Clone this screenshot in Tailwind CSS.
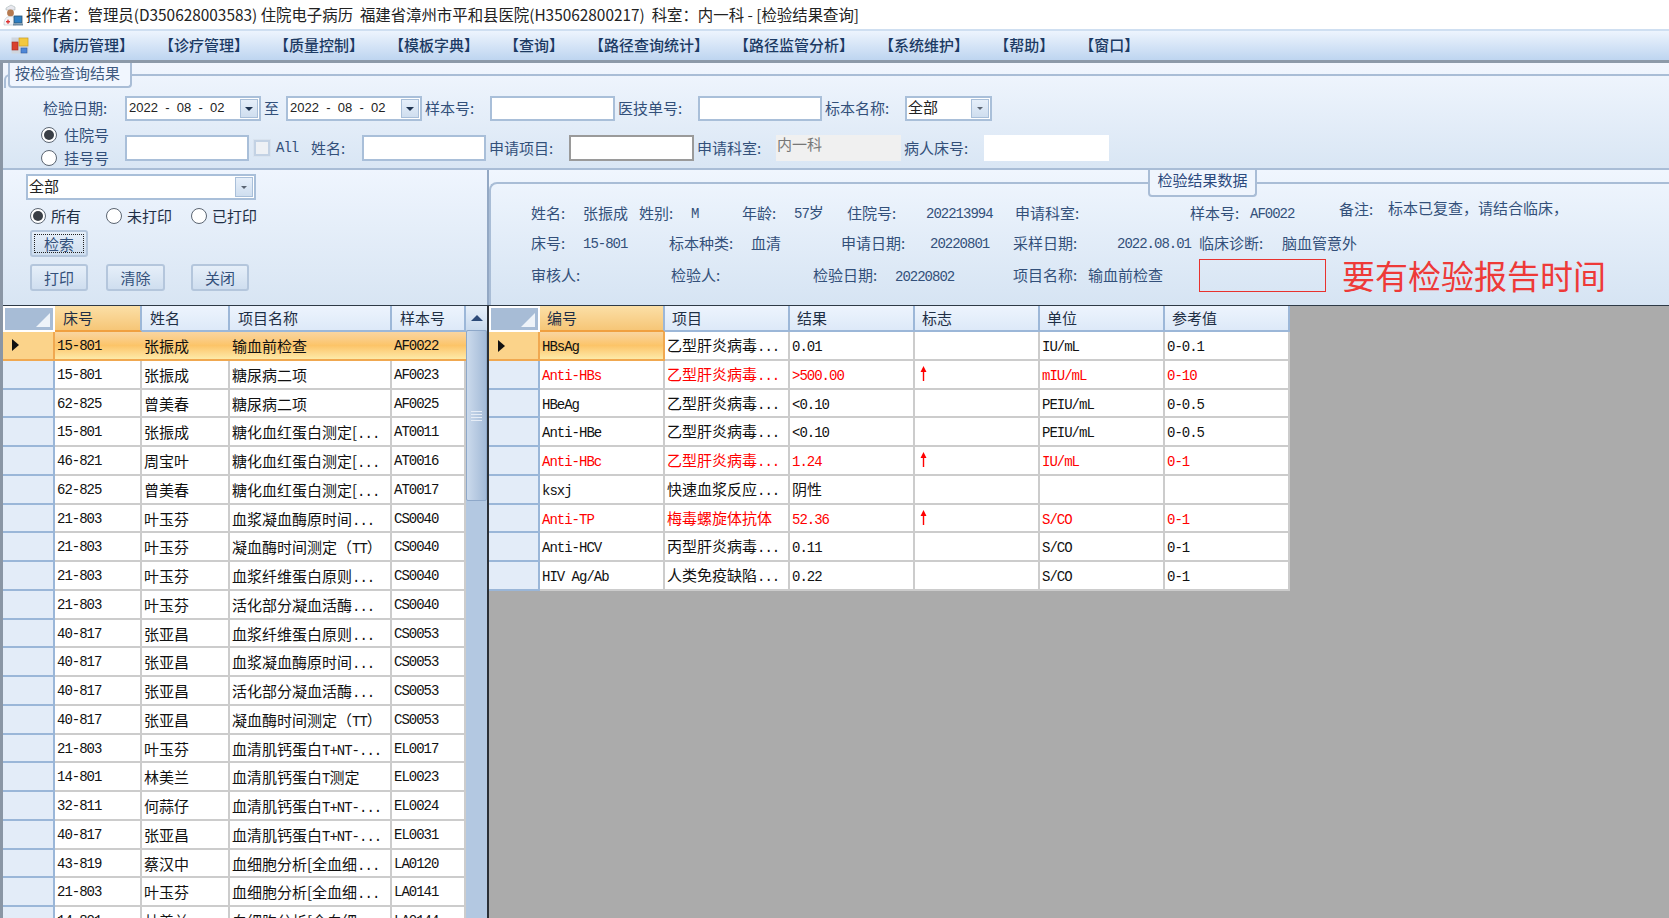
<!doctype html>
<html lang="zh">
<head>
<meta charset="utf-8">
<title>检验结果查询</title>
<script src="https://cdn.jsdelivr.net/npm/@tailwindcss/browser@4"></script>
</head>
<body class="m-0">
<div class="w-[1669px] h-[918px] overflow-hidden flex flex-col bg-[#8a96a5] text-[#111] font-['Noto_Sans_CJK_SC',sans-serif]">

  <!-- title bar -->
  <div class="h-[29px] shrink-0 bg-white flex items-center pl-[3px] text-[15.4px] text-[#222]">
    <svg class="w-[20px] h-[22px] mr-[3px]" viewBox="0 0 20 22">
      <path d="M3 4 L8 1 L12 3 L12 6 L3 6Z" fill="#e8e8ee" stroke="#9aa" stroke-width=".5"/>
      <circle cx="7.5" cy="9" r="3.4" fill="#b5794f"/>
      <path d="M1 21 C1 14 4 12.5 7.5 12.5 C11 12.5 13 14 13 21Z" fill="#f3f5f8" stroke="#a8b0bb" stroke-width=".5"/>
      <rect x="3" y="17" width="4" height="1.4" fill="#d33"/><rect x="4.3" y="15.7" width="1.4" height="4" fill="#d33"/>
      <rect x="11" y="12" width="8" height="7" fill="#2f7fc4" stroke="#27506f" stroke-width=".8"/>
      <rect x="10" y="19.5" width="10" height="2" fill="#6f8ba3"/>
    </svg>
    <span class="whitespace-pre">操作者：管理员(D350628003583) 住院电子病历  福建省漳州市平和县医院(H35062800217)  科室：内一科 - [检验结果查询]</span>
  </div>

  <!-- menu bar -->
  <div class="h-[34px] shrink-0 border-t-2 border-[#cfdff1] border-b-[3px] border-b-[#8d9aa9] bg-gradient-to-b from-[#edf4fd] to-[#bed5f0] flex items-center pl-[11px] text-[15px] font-medium text-[#1c3a63]">
    <svg class="w-[18px] h-[17px] mr-[15px]" viewBox="0 0 18 17">
      <rect x="0.5" y="0.5" width="17" height="16" fill="#cfd6de"/>
      <rect x="8" y="1" width="9" height="8" fill="#f3c83e" stroke="#c99a1c" stroke-width=".6"/>
      <rect x="1" y="5" width="6" height="8" fill="#d9412f" stroke="#a52b1f" stroke-width=".6"/>
      <rect x="10" y="11" width="6" height="5" fill="#4f87d6" stroke="#2e5ea8" stroke-width=".6"/>
    </svg>
    <nav class="flex gap-[25px]">
      <span>【病历管理】</span><span>【诊疗管理】</span><span>【质量控制】</span><span>【模板字典】</span><span>【查询】</span><span>【路径查询统计】</span><span>【路径监管分析】</span><span>【系统维护】</span><span>【帮助】</span><span>【窗口】</span>
    </nav>
  </div>

  <div class="flex-1 min-h-0 pl-[3px] flex flex-col">
    <!-- query group -->
    <section class="relative h-[107px] shrink-0 pt-[33px] bg-gradient-to-b from-[#f1f6fe] to-[#d9e6f4] border-b-2 border-[#a9bdd6] text-[15px] text-[#33507a] [&_span]:whitespace-nowrap">
      <div class="absolute left-[1px] right-0 top-[11px] h-[14px] border-t-2 border-l-2 border-[#a9bdd6] rounded-tl-[6px]"></div>
      <div class="absolute left-[5px] top-0 w-[124px] h-[25px] bg-[#f1f6fe] border-2 border-t-0 border-[#a9bdd6] rounded-b-[4px] pl-[5px] text-[15px] leading-[20px] text-[#3f5a80]">按检验查询结果</div>

      <div class="relative flex items-center h-[25px] pl-[40px]">
        <span class="w-[82px]">检验日期:</span>
        <div class="w-[136px] h-[25px] bg-white border-2 border-[#a9bfd9] flex items-center pl-[2px] pr-[1px] text-[13px] text-[#222] font-['Liberation_Sans',sans-serif]">
          <span class="flex-1 -mt-[2px] !whitespace-pre">2022  -  08  -  02</span>
          <span class="w-[18px] h-[19px] bg-gradient-to-b from-[#e6effa] to-[#cfdeef] border border-[#a9bfd9] flex items-center justify-center"><i class="border-x-[4px] border-x-transparent border-t-[4px] border-t-[#1f3350]"></i></span>
        </div>
        <span class="w-[25px] pl-[3px]">至</span>
        <div class="w-[136px] h-[25px] bg-white border-2 border-[#a9bfd9] flex items-center pl-[2px] pr-[1px] text-[13px] text-[#222] font-['Liberation_Sans',sans-serif]">
          <span class="flex-1 -mt-[2px] !whitespace-pre">2022  -  08  -  02</span>
          <span class="w-[18px] h-[19px] bg-gradient-to-b from-[#e6effa] to-[#cfdeef] border border-[#a9bfd9] flex items-center justify-center"><i class="border-x-[4px] border-x-transparent border-t-[4px] border-t-[#1f3350]"></i></span>
        </div>
        <span class="w-[68px] pl-[3px]">样本号:</span>
        <div class="w-[125px] h-[25px] bg-white border-2 border-[#a9bfd9]"></div>
        <span class="w-[83px] pl-[3px]">医技单号:</span>
        <div class="w-[124px] h-[25px] bg-white border-2 border-[#a9bfd9]"></div>
        <span class="w-[83px] pl-[3px]">标本名称:</span>
        <div class="w-[87px] h-[25px] bg-white border-2 border-[#a9bfd9] flex items-center pl-[1px] pr-[1px] text-[15px] text-[#222]">
          <span class="flex-1 -mt-[2px]">全部</span>
          <span class="w-[18px] h-[19px] bg-gradient-to-b from-[#e6effa] to-[#cfdeef] border border-[#a9bfd9] flex items-center justify-center"><i class="border-x-[3px] border-x-transparent border-t-[3px] border-t-[#5a6472]"></i></span>
        </div>
      </div>

      <div class="relative flex h-[48px] pl-[38px]">
        <div class="w-[84px] flex flex-col pt-[3px]">
          <label class="h-[26px] flex items-center gap-[7px]"><span class="w-[16px] h-[16px] rounded-full border border-[#5b6572] bg-white flex items-center justify-center"><i class="w-[10px] h-[10px] rounded-full bg-[#3a3f46]"></i></span>住院号</label>
          <label class="h-[26px] flex items-center gap-[7px]"><span class="w-[16px] h-[16px] rounded-full border border-[#5b6572] bg-white"></span>挂号号</label>
        </div>
        <div class="flex items-center h-[26px] mt-[14px]">
          <div class="w-[124px] h-[26px] bg-white border-2 border-[#a9bfd9]"></div>
          <span class="w-[16px] h-[16px] ml-[5px] border-2 border-[#c3d2e4] bg-[#eef1f5] outline outline-1 outline-[#d9e3ef]"></span>
          <span class="w-[40px] pl-[6px] text-[14px] tracking-[-1px] font-['Liberation_Mono',monospace]">All</span>
          <span class="w-[52px] pl-[1px]">姓名:</span>
          <div class="w-[124px] h-[26px] bg-white border-2 border-[#a9bfd9]"></div>
          <span class="w-[83px] pl-[3px]">申请项目:</span>
          <div class="w-[125px] h-[26px] bg-white border-2 border-[#9a9a9a]"></div>
          <span class="w-[82px] pl-[3px]">申请科室:</span>
          <div class="w-[125px] h-[26px] bg-[#f0f0f0] pl-[1px] text-[15px] leading-[18px] text-[#777]">内一科</div>
          <span class="w-[83px] pl-[3px]">病人床号:</span>
          <div class="w-[125px] h-[26px] bg-white"></div>
        </div>
      </div>
    </section>

    <!-- middle -->
    <div class="h-[135px] shrink-0 flex">
      <div class="w-[484px] shrink-0 pt-[4px] bg-gradient-to-b from-[#eff5fe] to-[#d8e5f3] text-[15px] text-[#1f2f45]">
        <div class="ml-[23px] w-[230px] h-[26px] bg-white border-2 border-[#a9bfd9] flex items-center pl-[1px] pr-[1px] text-[#222]">
          <span class="flex-1 -mt-[2px]">全部</span>
          <span class="w-[18px] h-[20px] bg-gradient-to-b from-[#e6effa] to-[#cfdeef] border border-[#a9bfd9] flex items-center justify-center"><i class="border-x-[3px] border-x-transparent border-t-[3px] border-t-[#5a6472]"></i></span>
        </div>
        <div class="mt-[7px] ml-[27px] h-[18px] flex">
          <label class="w-[76px] flex items-center gap-[5px]"><span class="w-[16px] h-[16px] rounded-full border border-[#5b6572] bg-white flex items-center justify-center"><i class="w-[10px] h-[10px] rounded-full bg-[#3a3f46]"></i></span>所有</label>
          <label class="w-[85px] flex items-center gap-[5px]"><span class="w-[16px] h-[16px] rounded-full border border-[#5b6572] bg-white"></span>未打印</label>
          <label class="flex items-center gap-[5px]"><span class="w-[16px] h-[16px] rounded-full border border-[#5b6572] bg-white"></span>已打印</label>
        </div>
        <div class="mt-[5px] ml-[27px] w-[58px] h-[27px] p-[2px] bg-gradient-to-b from-[#e6eff9] to-[#cfdeef] border-2 border-[#b4c6dc] rounded-[3px]">
          <div class="h-full border border-dotted border-[#222] text-center leading-[17px] text-[#33507a]">检索</div>
        </div>
        <div class="mt-[7px] ml-[27px] flex gap-[18px] text-[#33507a] [&>button]:w-[58px] [&>button]:h-[27px] [&>button]:bg-gradient-to-b [&>button]:from-[#e6eff9] [&>button]:to-[#cfdeef] [&>button]:border-2 [&>button]:border-[#b4c6dc] [&>button]:rounded-[3px] [&>button]:leading-[20px]">
          <button>打印</button><button class="!w-[59px]">清除</button><button class="ml-[8px]">关闭</button>
        </div>
      </div>
      <div class="w-[2px] shrink-0 bg-[#93a8c4]"></div>
      <section class="relative flex-1 bg-gradient-to-b from-[#f0f6fe] to-[#d6e4f3] text-[15px] text-[#33507a]">
        <div class="absolute inset-x-0 top-[12px] bottom-0 border-t-2 border-l-2 border-[#a9bdd6] rounded-tl-[8px]"></div>
        <div class="absolute left-[659px] top-0 w-[109px] h-[27px] bg-[#eff5fd] border-2 border-t-0 border-[#a9bdd6] rounded-b-[4px] text-center text-[15px] leading-[20px] text-[#2c4a7d]">检验结果数据</div>
        <div class="relative pl-[42px] pt-[33px] [&>div]:flex [&>div]:items-center [&_b]:font-normal [&_b]:text-[14px] [&_b]:tracking-[-1px] [&_b]:font-['Liberation_Mono',monospace] [&_span]:whitespace-nowrap">
          <div class="h-[20px]">
            <span class="w-[52px]">姓名:</span><span class="w-[56px]">张振成</span><span class="w-[52px]">姓别:</span><span class="w-[51px]"><b>M</b></span><span class="w-[52px]">年龄:</span><span class="w-[53px]"><b>57</b>岁</span><span class="w-[79px]">住院号:</span><span class="w-[89px]"><b>202213994</b></span><span class="w-[175px]">申请科室:</span><span class="w-[60px]">样本号:</span><span class="w-[89px]"><b>AF0022</b></span><span class="w-[49px] -mt-[7px]">备注:</span><span class="-mt-[9px]">标本已复查，请结合临床，</span>
          </div>
          <div class="h-[20px] mt-[10px]">
            <span class="w-[52px]">床号:</span><span class="w-[86px]"><b>15-801</b></span><span class="w-[82px]">标本种类:</span><span class="w-[90px]">血清</span><span class="w-[89px]">申请日期:</span><span class="w-[83px]"><b>20220801</b></span><span class="w-[104px]">采样日期:</span><span class="w-[82px]"><b>2022.08.01</b></span><span class="w-[83px]">临床诊断:</span><span>脑血管意外</span>
          </div>
          <div class="h-[33px] mt-[6px]">
            <span class="w-[140px]">审核人:</span><span class="w-[142px]">检验人:</span><span class="w-[82px]">检验日期:</span><span class="w-[118px]"><b>20220802</b></span><span class="w-[75px]">项目名称:</span><span class="w-[111px]">输血前检查</span>
            <span class="w-[127px] h-[33px] border border-[#e8322e]"></span><span class="ml-[16px] -mt-[1px] text-[33px] leading-[33px] text-[#ee3a38]">要有检验报告时间</span>
          </div>
        </div>
      </section>
    </div>

    <!-- grids -->
    <div class="flex-1 min-h-0 flex border-t border-[#2e3a46]">
      <div class="w-[484px] shrink-0 flex overflow-hidden">
        <div class="w-[463px] shrink-0 bg-[#ababab] text-[15px] [&>div]:grid [&>div]:grid-cols-[52px_87px_88px_162px_74px] [&>div>span]:block [&>div>span]:whitespace-nowrap [&>div>span]:overflow-hidden">
          <div class="h-[26px] leading-[24px] text-[#1f2f45] [&>span]:bg-gradient-to-b [&>span]:from-[#edf4fd] [&>span]:to-[#dde9f8] [&>span]:border-r-2 [&>span]:border-b-2 [&>span]:border-[#9cb7d8] [&>span]:pl-[8px]">
            <span class="relative !bg-none !bg-[#a7bcd6] border-2 !border-white"><i class="absolute right-[3px] bottom-[3px] w-[14px] h-[14px] bg-[#eef3f9] [clip-path:polygon(100%_0,100%_100%,0_100%)]"></i></span><span class="!from-[#fbdfa6] !to-[#f6c677] !border-b-[#f0a040]">床号</span><span>姓名</span><span>项目名称</span><span>样本号</span>
          </div>
          <div class="h-[28.75px] leading-[27px] bg-gradient-to-b from-[#f9d5a0] via-[#fcc468] to-[#fdeaa8] border-b-2 border-[#f0a850] [&>span]:pl-[2px] [&>span:nth-child(2)]:text-[14px] [&>span:nth-child(2)]:tracking-[-1px] [&>span:nth-child(2)]:leading-[28px] [&>span:nth-child(2)]:font-['Liberation_Mono',monospace] [&>span:nth-child(5)]:text-[14px] [&>span:nth-child(5)]:tracking-[-1px] [&>span:nth-child(5)]:leading-[28px] [&>span:nth-child(5)]:font-['Liberation_Mono',monospace]">
            <span class="!flex items-center !pl-[9px] bg-[#fbd38a] border-r-2 border-[#f0a850]"><svg class="w-[7px] h-[12px]" viewBox="0 0 7 12"><path d="M0 0L7 6L0 12Z" fill="#111"/></svg></span><span>15-801</span><span>张振成</span><span>输血前检查</span><span>AF0022</span>
          </div>
          <div class="!block [&>div]:grid [&>div]:grid-cols-[52px_87px_88px_162px_74px] [&>div]:h-[28.75px] [&>div]:leading-[27px] [&>div>span]:block [&>div>span]:whitespace-nowrap [&>div>span]:overflow-hidden [&>div>span]:bg-white [&>div>span]:border-r-2 [&>div>span]:border-b-2 [&>div>span]:border-[#cccccc] [&>div>span]:pl-[2px] [&>div>span:first-child]:bg-[#e3ecf8] [&>div>span:first-child]:border-[#9ab6d8] [&>div>span:nth-child(2)]:text-[14px] [&>div>span:nth-child(2)]:tracking-[-1px] [&>div>span:nth-child(2)]:leading-[28px] [&>div>span:nth-child(2)]:font-['Liberation_Mono',monospace] [&>div>span:nth-child(5)]:text-[14px] [&>div>span:nth-child(5)]:tracking-[-1px] [&>div>span:nth-child(5)]:leading-[28px] [&>div>span:nth-child(5)]:font-['Liberation_Mono',monospace] [&_b]:font-normal [&_b]:text-[14px] [&_b]:tracking-[-1px] [&_b]:font-['Liberation_Mono',monospace]">
            <div><span></span><span>15-801</span><span>张振成</span><span>糖尿病二项</span><span>AF0023</span></div>
            <div><span></span><span>62-825</span><span>曾美春</span><span>糖尿病二项</span><span>AF0025</span></div>
            <div><span></span><span>15-801</span><span>张振成</span><span>糖化血红蛋白测定[<b>...</b></span><span>AT0011</span></div>
            <div><span></span><span>46-821</span><span>周宝叶</span><span>糖化血红蛋白测定[<b>...</b></span><span>AT0016</span></div>
            <div><span></span><span>62-825</span><span>曾美春</span><span>糖化血红蛋白测定[<b>...</b></span><span>AT0017</span></div>
            <div><span></span><span>21-803</span><span>叶玉芬</span><span>血浆凝血酶原时间<b>...</b></span><span>CS0040</span></div>
            <div><span></span><span>21-803</span><span>叶玉芬</span><span>凝血酶时间测定（<b>TT</b>）</span><span>CS0040</span></div>
            <div><span></span><span>21-803</span><span>叶玉芬</span><span>血浆纤维蛋白原则<b>...</b></span><span>CS0040</span></div>
            <div><span></span><span>21-803</span><span>叶玉芬</span><span>活化部分凝血活酶<b>...</b></span><span>CS0040</span></div>
            <div><span></span><span>40-817</span><span>张亚昌</span><span>血浆纤维蛋白原则<b>...</b></span><span>CS0053</span></div>
            <div><span></span><span>40-817</span><span>张亚昌</span><span>血浆凝血酶原时间<b>...</b></span><span>CS0053</span></div>
            <div><span></span><span>40-817</span><span>张亚昌</span><span>活化部分凝血活酶<b>...</b></span><span>CS0053</span></div>
            <div><span></span><span>40-817</span><span>张亚昌</span><span>凝血酶时间测定（<b>TT</b>）</span><span>CS0053</span></div>
            <div><span></span><span>21-803</span><span>叶玉芬</span><span>血清肌钙蛋白<b>T+NT-...</b></span><span>EL0017</span></div>
            <div><span></span><span>14-801</span><span>林美兰</span><span>血清肌钙蛋白<b>T</b>测定</span><span>EL0023</span></div>
            <div><span></span><span>32-811</span><span>何蒜仔</span><span>血清肌钙蛋白<b>T+NT-...</b></span><span>EL0024</span></div>
            <div><span></span><span>40-817</span><span>张亚昌</span><span>血清肌钙蛋白<b>T+NT-...</b></span><span>EL0031</span></div>
            <div><span></span><span>43-819</span><span>蔡汉中</span><span>血细胞分析[全血细<b>...</b></span><span>LA0120</span></div>
            <div><span></span><span>21-803</span><span>叶玉芬</span><span>血细胞分析[全血细<b>...</b></span><span>LA0141</span></div>
            <div><span></span><span>14-801</span><span>林美兰</span><span>血细胞分析[全血细<b>...</b></span><span>LA0144</span></div>
          </div>
        </div>
        <div class="flex-1 bg-[#b3c8e1] flex flex-col">
          <div class="h-[24px] bg-gradient-to-b from-[#e6eff9] to-[#c9daee] flex items-center justify-center"><i class="border-x-[6px] border-x-transparent border-b-[6px] border-b-[#2c4a78]"></i></div>
          <div class="h-[171px] bg-gradient-to-r from-[#cbdaec] to-[#a3bad7] border border-[#8ea8c9] rounded-[2px] flex flex-col items-center justify-center gap-[2px]">
            <i class="w-[11px] h-[1px] bg-[#e6edf6]"></i><i class="w-[11px] h-[1px] bg-[#e6edf6]"></i><i class="w-[11px] h-[1px] bg-[#e6edf6]"></i><i class="w-[11px] h-[1px] bg-[#e6edf6]"></i>
          </div>
        </div>
      </div>

      <div class="w-[2px] shrink-0 bg-[#2a2f36]"></div>

      <div class="flex-1 bg-[#ababab] text-[15px] [&_b]:font-normal [&_b]:text-[14px] [&_b]:tracking-[-1px] [&_b]:font-['Liberation_Mono',monospace] [&>div]:grid [&>div]:w-[801px] [&>div]:grid-cols-[51px_125px_125px_125px_125px_125px_125px] [&>div>span]:block [&>div>span]:whitespace-nowrap [&>div>span]:overflow-hidden">
        <div class="h-[26px] leading-[24px] text-[#1f2f45] [&>span]:bg-gradient-to-b [&>span]:from-[#edf4fd] [&>span]:to-[#dde9f8] [&>span]:border-r-2 [&>span]:border-b-2 [&>span]:border-[#9cb7d8] [&>span]:pl-[7px]">
          <span class="relative !bg-none !bg-[#a7bcd6] border-2 !border-white"><i class="absolute right-[3px] bottom-[3px] w-[14px] h-[14px] bg-[#eef3f9] [clip-path:polygon(100%_0,100%_100%,0_100%)]"></i></span><span class="!from-[#fbdfa6] !to-[#f6c677] !border-b-[#f0a040]">编号</span><span>项目</span><span>结果</span><span>标志</span><span>单位</span><span>参考值</span>
        </div>
        <div class="!block [&>div]:grid [&>div]:grid-cols-[51px_125px_125px_125px_125px_125px_125px] [&>div]:h-[28.75px] [&>div]:leading-[26px] [&>div>span]:block [&>div>span]:whitespace-nowrap [&>div>span]:overflow-hidden [&>div>span]:bg-white [&>div>span]:border-r-2 [&>div>span]:border-b-2 [&>div>span]:border-[#cccccc] [&>div>span]:pl-[2px] [&>div>span:first-child]:bg-[#e3ecf8] [&>div>span:first-child]:border-[#9ab6d8] [&_svg]:w-[7px] [&_svg]:h-[15px] [&_svg]:ml-[3px] [&_svg]:mt-[5px]">
          <div><span class="!flex items-center !pl-[9px] !bg-[#fbd38a] !border-[#f0a850]"><svg class="!w-[7px] !h-[12px] !ml-0 !mt-[2px]" viewBox="0 0 7 12"><path d="M0 0L7 6L0 12Z" fill="#111"/></svg></span><span class="!bg-transparent bg-gradient-to-b from-[#f9d5a0] via-[#fcc468] to-[#fdeaa8] !border-[#f0a850]"><b>HBsAg</b></span><span>乙型肝炎病毒<b>...</b></span><span><b>0.01</b></span><span></span><span><b>IU/mL</b></span><span><b>0-0.1</b></span></div>
          <div class="text-[#f00]"><span></span><span><b>Anti-HBs</b></span><span>乙型肝炎病毒<b>...</b></span><span><b>&gt;500.00</b></span><span><svg viewBox="0 0 7 15"><path d="M3.5 0L6.5 6H4.2V15H2.8V6H.5Z" fill="#f00"/></svg></span><span><b>mIU/mL</b></span><span><b>0-10</b></span></div>
          <div><span></span><span><b>HBeAg</b></span><span>乙型肝炎病毒<b>...</b></span><span><b>&lt;0.10</b></span><span></span><span><b>PEIU/mL</b></span><span><b>0-0.5</b></span></div>
          <div><span></span><span><b>Anti-HBe</b></span><span>乙型肝炎病毒<b>...</b></span><span><b>&lt;0.10</b></span><span></span><span><b>PEIU/mL</b></span><span><b>0-0.5</b></span></div>
          <div class="text-[#f00]"><span></span><span><b>Anti-HBc</b></span><span>乙型肝炎病毒<b>...</b></span><span><b>1.24</b></span><span><svg viewBox="0 0 7 15"><path d="M3.5 0L6.5 6H4.2V15H2.8V6H.5Z" fill="#f00"/></svg></span><span><b>IU/mL</b></span><span><b>0-1</b></span></div>
          <div><span></span><span><b>ksxj</b></span><span>快速血浆反应<b>...</b></span><span>阴性</span><span></span><span></span><span></span></div>
          <div class="text-[#f00]"><span></span><span><b>Anti-TP</b></span><span>梅毒螺旋体抗体</span><span><b>52.36</b></span><span><svg viewBox="0 0 7 15"><path d="M3.5 0L6.5 6H4.2V15H2.8V6H.5Z" fill="#f00"/></svg></span><span><b>S/CO</b></span><span><b>0-1</b></span></div>
          <div><span></span><span><b>Anti-HCV</b></span><span>丙型肝炎病毒<b>...</b></span><span><b>0.11</b></span><span></span><span><b>S/CO</b></span><span><b>0-1</b></span></div>
          <div><span></span><span><b>HIV Ag/Ab</b></span><span>人类免疫缺陷<b>...</b></span><span><b>0.22</b></span><span></span><span><b>S/CO</b></span><span><b>0-1</b></span></div>
        </div>
      </div>
    </div>
  </div>
</div>
</body>
</html>
